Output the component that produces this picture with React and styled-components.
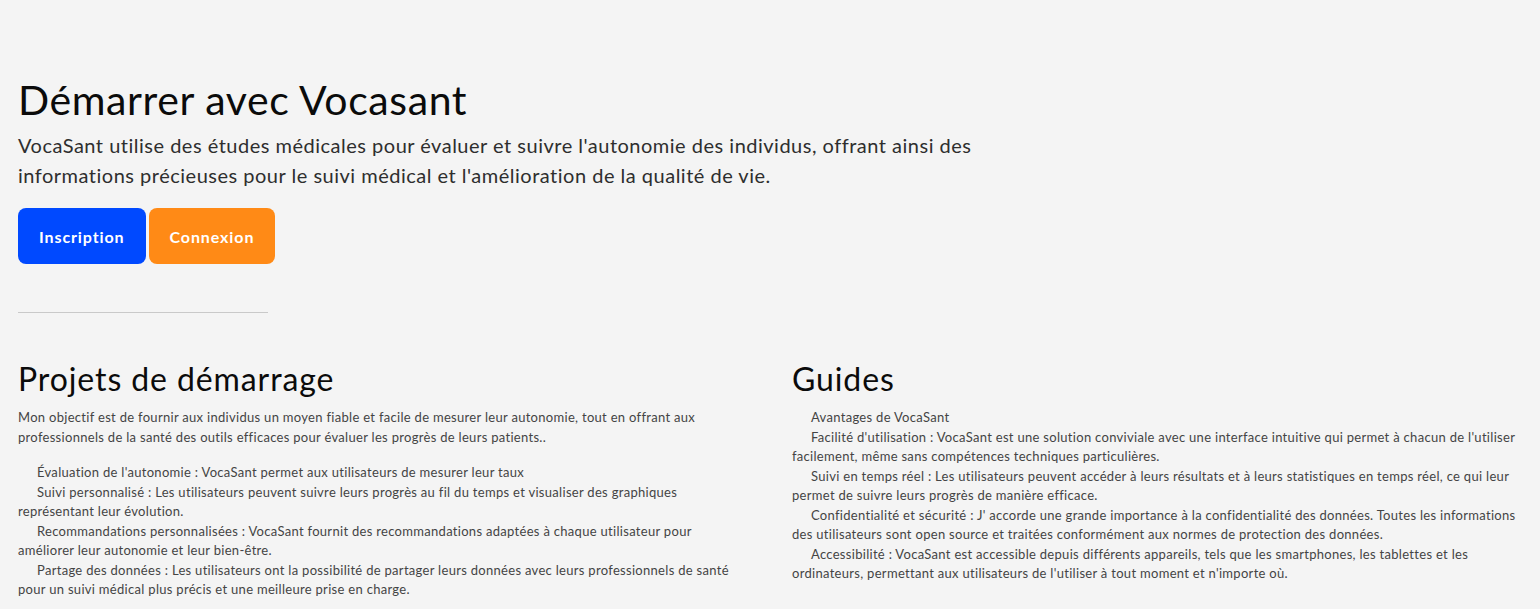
import React from 'react'
import styled, { createGlobalStyle } from 'styled-components'

const GlobalStyle = createGlobalStyle`
    * { box-sizing: border-box; }
    body {
        margin: 0;
        background: #f4f4f4;
        font-family: Lato, "Noto Sans", sans-serif;
        color: #222;
    }
`

const features = [
    "Évaluation de l'autonomie : VocaSant permet aux utilisateurs de mesurer leur taux",
    "Suivi personnalisé : Les utilisateurs peuvent suivre leurs progrès au fil du temps et visualiser des graphiques représentant leur évolution.",
    "Recommandations personnalisées : VocaSant fournit des recommandations adaptées à chaque utilisateur pour améliorer leur autonomie et leur bien-être.",
    "Partage des données : Les utilisateurs ont la possibilité de partager leurs données avec leurs professionnels de santé pour un suivi médical plus précis et une meilleure prise en charge.",
]

const guides = [
    "Avantages de VocaSant",
    "Facilité d'utilisation : VocaSant est une solution conviviale avec une interface intuitive qui permet à chacun de l'utiliser facilement, même sans compétences techniques particulières.",
    "Suivi en temps réel : Les utilisateurs peuvent accéder à leurs résultats et à leurs statistiques en temps réel, ce qui leur permet de suivre leurs progrès de manière efficace.",
    "Confidentialité et sécurité : J' accorde une grande importance à la confidentialité des données. Toutes les informations des utilisateurs sont open source et traitées conformément aux normes de protection des données.",
    "Accessibilité : VocaSant est accessible depuis différents appareils, tels que les smartphones, les tablettes et les ordinateurs, permettant aux utilisateurs de l'utiliser à tout moment et n'importe où.",
]

const App = () => {
    return (
        <Page>
            <GlobalStyle />
            <Hero>
                <Title>Démarrer avec Vocasant</Title>
                <Lead>
                    VocaSant utilise des études médicales pour évaluer et suivre l'autonomie des individus, offrant ainsi des informations précieuses pour le suivi médical et l'amélioration de la qualité de vie.
                </Lead>
                <Actions>
                    <Button $color="#0049ff">Inscription</Button>
                    <Button $color="#ff8a16">Connexion</Button>
                </Actions>
            </Hero>
            <Divider />
            <Columns>
                <Column>
                    <SectionTitle>Projets de démarrage</SectionTitle>
                    <Text>
                        Mon objectif est de fournir aux individus un moyen fiable et facile de mesurer leur autonomie, tout en offrant aux professionnels de la santé des outils efficaces pour évaluer les progrès de leurs patients..
                    </Text>
                    <List $spaced>
                        {features.map(item => <Item key={item}>{item}</Item>)}
                    </List>
                </Column>
                <Column>
                    <SectionTitle>Guides</SectionTitle>
                    <List>
                        {guides.map(item => <Item key={item}>{item}</Item>)}
                    </List>
                </Column>
            </Columns>
        </Page>
    )
}

const Page = styled.main`
    padding: 74px 18px 0;
    min-height: 100vh;
`

const Hero = styled.section`
    display: flex;
    flex-direction: column;
    align-items: flex-start;
`

const Title = styled.h1`
    margin: 0;
    font-size: 41px;
    font-weight: 400;
    line-height: 52px;
    letter-spacing: 0.6px;
    color: #0b0b0b;
`

const Lead = styled.p`
    margin: 4px 0 18px;
    max-width: 980px;
    font-size: 20px;
    line-height: 30px;
    letter-spacing: 0.5px;
    color: #2e2e2e;
`

const Actions = styled.div`
    display: flex;
    gap: 3px;
`

const Button = styled.a`
    display: flex;
    align-items: center;
    justify-content: center;
    height: 56px;
    padding: 0 21px;
    border-radius: 8px;
    background: ${p => p.$color};
    color: #fff;
    font-size: 16px;
    font-weight: 700;
    letter-spacing: 0.9px;
    cursor: pointer;
`

const Divider = styled.hr`
    width: 250px;
    margin: 48px 0 0;
    border: none;
    border-top: 1px solid #c9c9c9;
`

const Columns = styled.div`
    display: grid;
    grid-template-columns: 1fr 1fr;
    column-gap: 44px;
    margin-top: 46px;
`

const Column = styled.section`
    display: flex;
    flex-direction: column;
`

const SectionTitle = styled.h2`
    margin: 0 0 9px;
    font-size: 32px;
    font-weight: 400;
    line-height: 40px;
    letter-spacing: 0.9px;
    color: #0b0b0b;
`

const Text = styled.p`
    margin: 0;
    font-size: 13px;
    line-height: 19.5px;
    letter-spacing: 0.3px;
    color: #444;
`

const List = styled.div`
    margin-top: ${p => (p.$spaced ? '16px' : '0')};
`

const Item = styled.p`
    margin: 0;
    text-indent: 19px;
    font-size: 13px;
    line-height: 19.5px;
    letter-spacing: 0.3px;
    color: #444;
`

export default App
